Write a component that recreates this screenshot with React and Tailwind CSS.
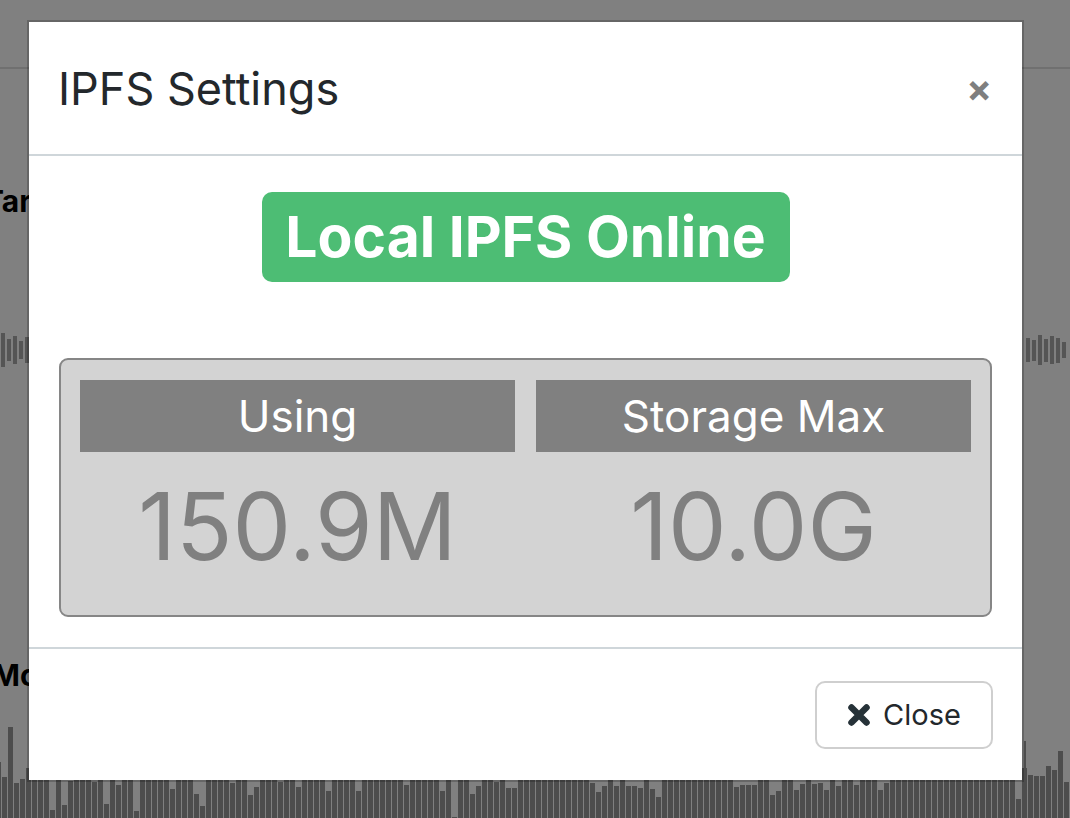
import React from "react";

// bottom bar chart of the page behind the modal (tops read from the screenshot)
const bottomBars = (() => {
    const h = Array(179).fill(50);
    const set = { 0: 56, 1: 41, 2: 91, 3: 35, 4: 39, 9: 8, 11: 13, 12: 37, 16: 36, 18: 14, 20: 33, 23: 7, 29: 29, 33: 24, 34: 12, 39: 35, 42: 23, 43: 31, 47: 36, 50: 31, 55: 27, 60: 27, 68: 33, 74: 27, 76: 1, 79: 24, 80: 32, 83: 36, 85: 30, 86: 30, 99: 35, 100: 26, 101: 32, 103: 32, 105: 32, 106: 32, 107: 30, 109: 29, 110: 21, 123: 31, 124: 33, 125: 33, 126: 33, 129: 23, 130: 27, 133: 28, 134: 34, 136: 34, 137: 35, 138: 28, 140: 32, 143: 33, 147: 28, 148: 35, 170: 19, 172: 43, 173: 42, 174: 42, 175: 52, 176: 48, 177: 67, 178: 36 };
    Object.keys(set).forEach((k) => (h[k] = set[k]));
    return h;
})();

const leftWave = [34, 22, 28, 18, 26];
const rightWave = [24, 21, 30, 23, 28, 25, 16];

const TimesIcon = () => (
    <svg width="24" height="24" viewBox="0 0 24 24">
        <path d="M4.5 4.5 L19.5 19.5 M19.5 4.5 L4.5 19.5" stroke="#263238" strokeWidth="6.5" strokeLinecap="round" />
    </svg>
);

const App = () => {
    return (
        <div className="relative h-[818px] w-full overflow-hidden bg-[#808080] font-['Inter',sans-serif]">
            {/* page behind the overlay */}
            <div className="flex h-full flex-col">
                <div className="h-[67px]" />
                <div className="h-[2px] bg-[#707070]" />
                <p className="ml-[-16px] mt-[117px] text-[30px] font-bold leading-none text-black">Target</p>
                <div className="mt-[98px] flex h-[72px] items-center justify-between">
                    <div className="flex items-center gap-[2px] pl-[1px]">
                        {leftWave.map((v, i) => (
                            <div key={i} className="w-[4px] bg-[#555]" style={{ height: v }} />
                        ))}
                    </div>
                    <div className="flex h-full items-center gap-[2px]">
                        <div className="mr-[2px] h-full w-[2px] bg-[#555]" />
                        {rightWave.map((v, i) => (
                            <div key={i} className="w-[4px] bg-[#555]" style={{ height: v }} />
                        ))}
                        <div className="w-[2px]" />
                    </div>
                </div>
                <p className="ml-[-8px] mt-[274px] text-[30px] font-bold leading-none text-black">Mode</p>
                <div className="relative mt-auto ml-[-4px] flex h-[95px] items-end gap-[1px]">
                    {bottomBars.map((v, i) => (
                        <div key={i} className="w-[5px] shrink-0 bg-[#4d4d4d]" style={{ height: v }} />
                    ))}
                    <div className="absolute bottom-0 left-[1028px] h-[77px] w-[2px] bg-[#4d4d4d]" />
                </div>
            </div>

            {/* modal */}
            <div className="absolute left-[27px] top-[20px] w-[997px] border-2 border-black/20 bg-white bg-clip-padding">
                <div className="flex h-[134px] items-center justify-between border-b-2 border-[#cfd6da] pl-[29px] pr-[30px]">
                    <h5 className="text-[45px] font-normal leading-none text-[#23282c]">IPFS Settings</h5>
                    <button className="text-[38px] font-bold leading-none text-[#7f7f7f]">×</button>
                </div>
                <div className="px-[30px] pb-[30px] pt-[36px]">
                    <div className="flex justify-center">
                        <span className="flex h-[90px] w-[528px] items-center justify-center rounded-[10px] bg-[#4dbd74] text-[57px] font-bold text-white">
                            Local IPFS Online
                        </span>
                    </div>
                    <div className="mt-[76px] h-[259px] rounded-[9px] border-2 border-[#868686] bg-[#d3d3d3] px-[19px] pt-[20px]">
                        <div className="grid grid-cols-2 gap-[21px]">
                            <div className="flex flex-col items-center">
                                <div className="flex h-[72px] w-full items-center justify-center bg-[#808080] text-[44px] text-white">Using</div>
                                <div className="mt-[28px] text-[93px] leading-none text-[#808080]">150.9M</div>
                            </div>
                            <div className="flex flex-col items-center">
                                <div className="flex h-[72px] w-full items-center justify-center bg-[#808080] text-[44px] text-white">Storage Max</div>
                                <div className="mt-[28px] text-[93px] leading-none text-[#808080]">10.0G</div>
                            </div>
                        </div>
                    </div>
                </div>
                <div className="flex h-[133px] items-center justify-end border-t-2 border-[#cfd6da] pr-[29px]">
                    <button className="flex h-[68px] w-[178px] items-center justify-center gap-[12px] rounded-[10px] border-2 border-[#cfcfcf] bg-white text-[29px] text-[#23282c]">
                        <TimesIcon />
                        Close
                    </button>
                </div>
            </div>
        </div>
    );
};

export default App;
